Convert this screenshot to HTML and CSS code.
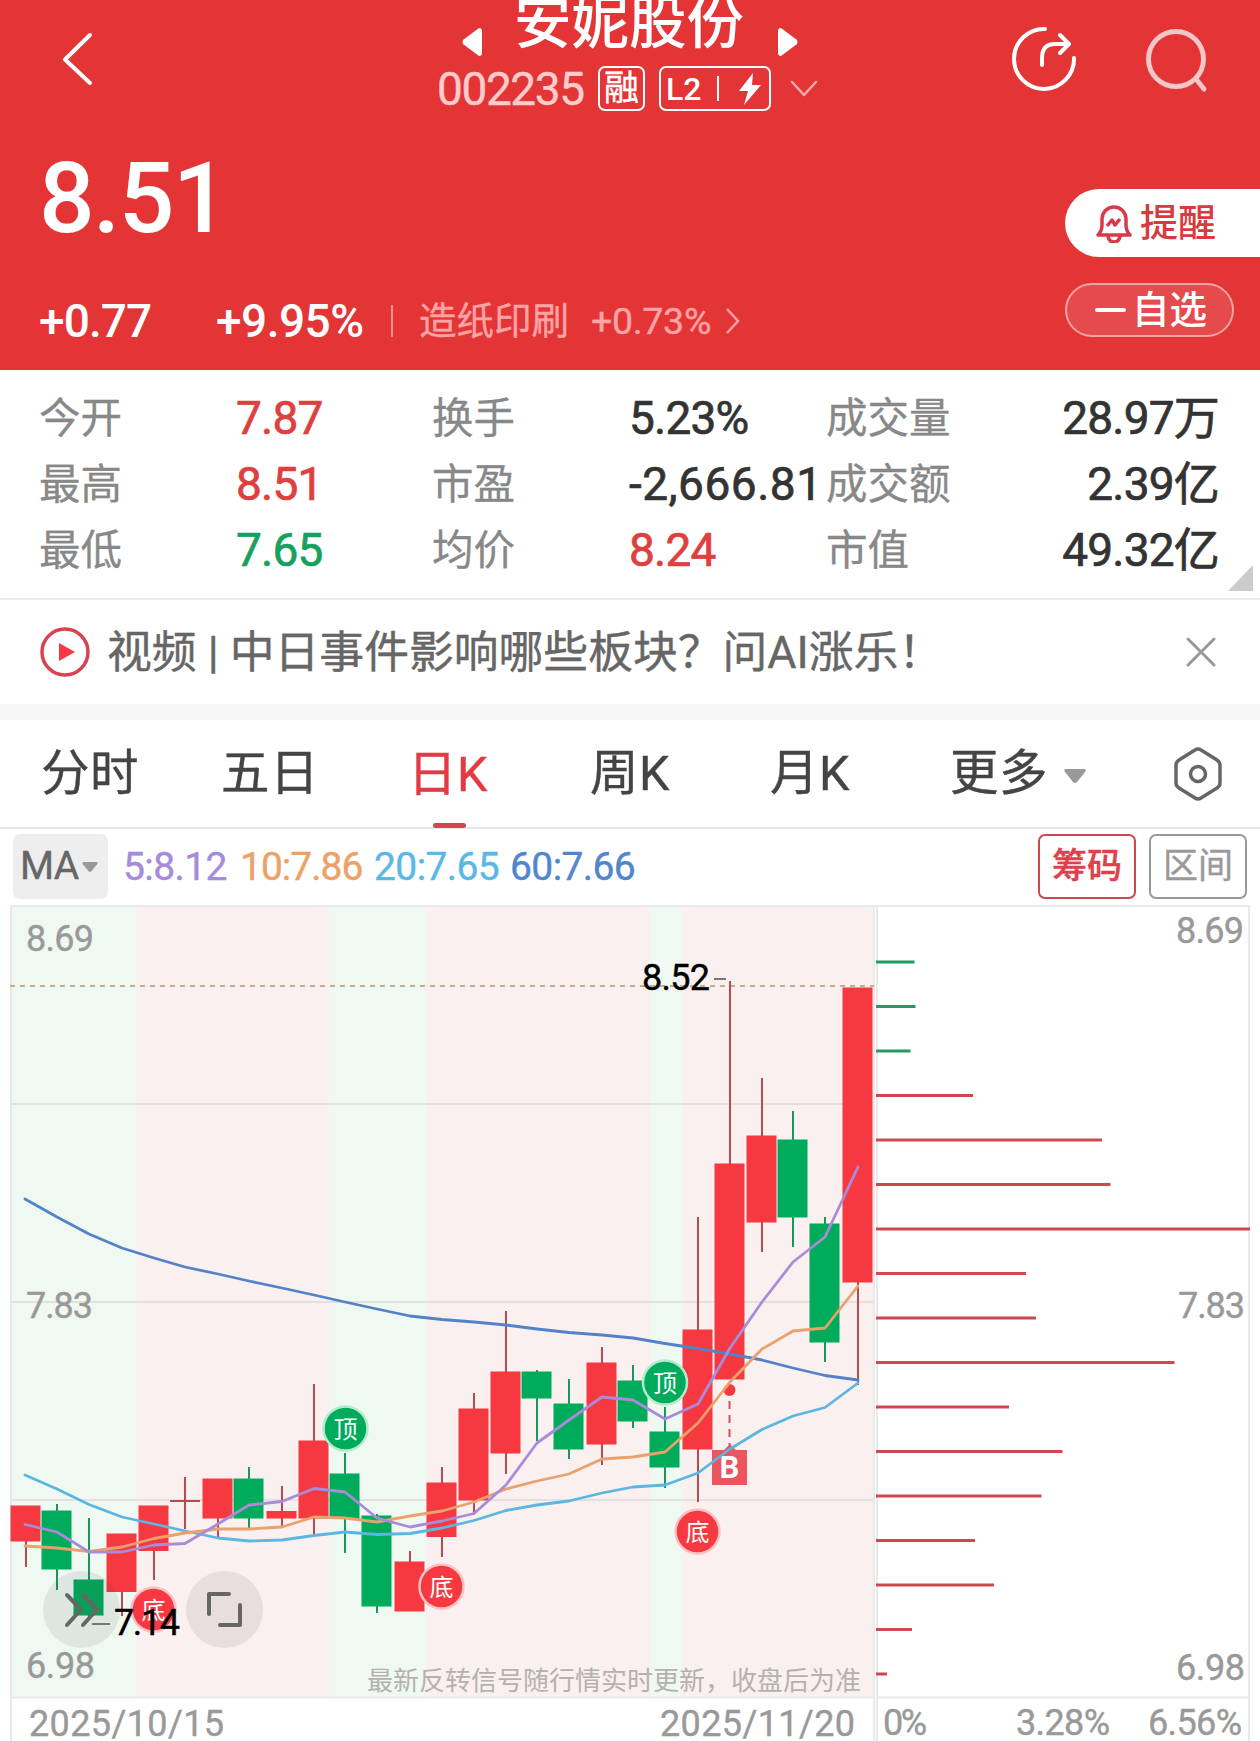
FILE: index.html
```
<!DOCTYPE html>
<html lang="zh-CN">
<head>
    <meta charset="UTF-8">
    <meta name="viewport" content="width=device-width, initial-scale=1.0">
    <title>安妮股份 002235</title>
    <link rel="stylesheet" href="styles.css">
</head>
<body>
    <header class="header">
        <div class="topbar">
            <svg class="back" width="36" height="56" viewBox="0 0 36 56"><path d="M30 5 5 29.500 30 53"/></svg>
            <div class="stock">
                <div class="stock-name">
                    <svg width="20" height="28" viewBox="0 0 20 28"><path d="M17 0q3 0 3 3v22q0 3-3 3L1 16q-1-2 0-4z"/></svg>
                    <h1>安妮股份</h1>
                    <svg width="20" height="28" viewBox="0 0 20 28"><path d="M3 0Q0 0 0 3v22q0 3 3 3l16-12q1-2 0-4z"/></svg>
                </div>
                <div class="stock-code">
                    <span class="code">002235</span>
                    <span class="tag">融</span>
                    <span class="tag tag-l2">L2<i></i>
                        <svg width="24" height="32" viewBox="0 0 24 32"><path d="M15 0 1 18h9L6 32 23 12h-9z"/></svg>
                    </span>
                    <svg class="down" width="28" height="18" viewBox="0 0 28 18"><path d="m2 2 12 13L26 2"/></svg>
                </div>
            </div>
            <svg class="share" width="66" height="66" viewBox="0 0 66 66"><path d="M34 3A30 30 0 1 0 63 32M31 39V32Q31 18 44 18H56M49 9l9 9-9 9"/></svg>
            <svg class="search" width="66" height="66" viewBox="0 0 66 66"><circle cx="32" cy="32" r="27.500"/><path d="m52 52 8 10"/></svg>
        </div>

        <div class="quote">
            <div class="quote-left">
                <div class="price">8.51</div>
                <div class="change">
                    <span class="diff">+0.77</span>
                    <span class="pct">+9.95%</span>
                    <i></i>
                    <span class="sector">造纸印刷</span>
                    <span class="sector-pct">+0.73%</span>
                    <svg width="16" height="28" viewBox="0 0 16 28"><path d="m2 2 11 12L2 26"/></svg>
                </div>
            </div>
            <div class="quote-right">
                <div class="remind">
                    <svg width="36" height="40" viewBox="0 0 36 40"><path d="M2 32Q6 28 6 22V16a12 12 0 0 1 24 0v6q0 6 4 10zM12 33q1 6 6 6t6-6M11 23l5-6 3 5 5-6"/></svg>
                    提醒
                </div>
                <div class="favorite"><i></i>自选</div>
            </div>
        </div>
    </header>

    <section class="stats">
        <span>今开</span><b class="up">7.87</b><span>换手</span><b>5.23%</b><span>成交量</span><b class="last">28.97万</b>
        <span>最高</span><b class="up">8.51</b><span>市盈</span><b class="wide">-2,666.81</b><span>成交额</span><b class="last">2.39亿</b>
        <span>最低</span><b class="down-price">7.65</b><span>均价</span><b class="up">8.24</b><span>市值</span><b class="last">49.32亿</b>
        <svg class="corner" width="25" height="26" viewBox="0 0 25 26"><path d="M25 0v26H0z"/></svg>
    </section>

    <section class="news">
        <svg width="50" height="50" viewBox="0 0 50 50"><circle cx="25" cy="25" r="23"/><path d="M19 16v18l16-9z"/></svg>
        <p>视频 | 中日事件影响哪些板块？问AI涨乐！</p>
        <svg class="close" width="30" height="30" viewBox="0 0 30 30"><path d="m2 2 26 26M28 2 2 28"/></svg>
    </section>

    <nav class="tabs">
        <span>分时</span>
        <span>五日</span>
        <span class="active">日K</span>
        <span>周K</span>
        <span>月K</span>
        <span class="more">更多<svg width="22" height="14" viewBox="0 0 22 14"><path d="M2 0h18q3 0 1 3l-8 10q-2 2-4 0L1 3Q-1 0 2 0z"/></svg></span>
        <svg class="setting" width="50" height="54" viewBox="0 0 50 54"><path d="M22 3q3-2 6 0l16 10q3 2 3 5v18q0 3-3 5L28 51q-3 2-6 0L6 41q-3-2-3-5V18q0-3 3-5z"/><circle cx="25" cy="27" r="7.500"/></svg>
    </nav>

    <div class="indicator">
        <span class="ma">MA<svg width="16" height="10" viewBox="0 0 22 14"><path d="M2 0h18q3 0 1 3l-8 10q-2 2-4 0L1 3Q-1 0 2 0z"/></svg></span>
        <span class="ma5">5:8.12</span>
        <span class="ma10">10:7.86</span>
        <span class="ma20">20:7.65</span>
        <span class="ma60">60:7.66</span>
        <button class="btn btn-on">筹码</button>
        <button class="btn">区间</button>
    </div>

    <svg class="chart" width="1260" height="840" viewBox="0 901 1260 840">
        <!-- signal zones -->
        <path class="zone-green" d="M11 906H137V1697H11zM329 906H426V1697H329M650 906H682V1697H650z"/>
        <path class="zone-red" d="M137 906H329V1697H137zM426 906H650V1697H426zM682 906H873V1697H682z"/>
        <path class="grid" d="M11 1104H873M11 1302H873M11 1500H873"/>
        <path class="frame" d="M10 906H1250M11 906V1741M874 906V1741M877 906V1741M1249 906V1741M11 1697.500H873M877 1697.500H1249"/>
        <path class="last-price" d="M10 986H874"/>

        <!-- candles -->
        <path class="wick-red" d="M26 1541V1567M122 1592V1616M154 1550V1580M185 1477V1529M170 1501H200M218 1517V1537M282 1486V1526M314 1384V1534M410 1551V1562M442 1467V1557M474 1393V1515M506 1311V1474M602 1347V1465M698 1217V1502M730 981V1164M762 1078V1252M858 1282V1385"/>
        <path class="wick-green" d="M57 1504V1590M89 1518V1620M249 1467V1528M345 1453V1553M377 1514V1613M537 1370V1441M569 1379V1459M633 1365V1428M665 1407V1488M793 1111V1247M825 1217V1362"/>
        <g class="red">
            <rect x="10.500" y="1505.500" width="30" height="36"/>
            <rect x="106.500" y="1533.500" width="30" height="58.500"/>
            <rect x="138.500" y="1505.500" width="30" height="45.500"/>
            <rect x="202.500" y="1478.500" width="30" height="40"/>
            <rect x="266.500" y="1511" width="30" height="7.500"/>
            <rect x="298.500" y="1440.500" width="30" height="78"/>
            <rect x="394.500" y="1561.500" width="30" height="50"/>
            <rect x="426.500" y="1482.500" width="30" height="54.500"/>
            <rect x="458.500" y="1408.500" width="30" height="92"/>
            <rect x="490.500" y="1371.500" width="30" height="82"/>
            <rect x="586.500" y="1362.500" width="30" height="82"/>
            <rect x="682.500" y="1329.500" width="30" height="120"/>
            <rect x="714.500" y="1163.500" width="30" height="216"/>
            <rect x="746.500" y="1135.500" width="30" height="87"/>
            <rect x="842.500" y="987.500" width="30" height="295"/>
        </g>
        <g class="green">
            <rect x="41.500" y="1510.500" width="30" height="59"/>
            <rect x="73.500" y="1579.500" width="30" height="36"/>
            <rect x="233.500" y="1478.500" width="30" height="40"/>
            <rect x="329.500" y="1473.500" width="30" height="45"/>
            <rect x="361.500" y="1515.500" width="30" height="91"/>
            <rect x="521.500" y="1371.500" width="30" height="27"/>
            <rect x="553.500" y="1403.500" width="30" height="46"/>
            <rect x="617.500" y="1380.500" width="30" height="41"/>
            <rect x="649.500" y="1431.500" width="30" height="36"/>
            <rect x="777.500" y="1139.500" width="30" height="78"/>
            <rect x="809.500" y="1223.500" width="30" height="119"/>
        </g>

        <!-- buy point -->
        <circle class="red" cx="729.500" cy="1390" r="6"/>
        <path class="buy-line" d="M729.500 1401V1446"/>
        <path class="buy-box" d="M712 1450H724L730 1444 736 1450H747V1485H712z"/>
        <text class="buy-text" x="729.500" y="1478">B</text>

        <!-- moving averages -->
        <polyline class="line60" points="25,1199 57,1217 89,1234 122,1248 154,1258 185,1267 218,1274 249,1281 282,1288 314,1295 345,1302 377,1309 410,1316 442,1319.500 474,1322 506,1325 537,1329 569,1332.500 602,1335 633,1338 665,1343.500 698,1348.500 730,1354 762,1360 793,1368 825,1375.500 858,1380"/>
        <polyline class="line20" points="25,1475 57,1489 89,1504.500 122,1517 154,1524 185,1531 218,1538 249,1541 282,1540 314,1535.500 345,1532 377,1534.500 410,1533.500 442,1528 474,1520.500 506,1510.500 537,1505 569,1501 602,1493 633,1487 665,1485 698,1473 730,1449 762,1429.500 793,1416 825,1407.500 858,1383"/>
        <polyline class="line10" points="25,1546 57,1548 89,1551.500 122,1547 154,1538.500 185,1533 218,1529 249,1529 282,1527 314,1517 345,1518 377,1522 410,1516 442,1511 474,1502 506,1489 537,1481 569,1474 602,1459 633,1457 665,1452 698,1423 730,1382 762,1349 793,1331 825,1328 858,1286"/>
        <polyline class="line5" points="25,1524.500 57,1532 89,1552 122,1552 154,1545 185,1543.500 218,1524 249,1505 282,1501.500 314,1488.500 345,1492 377,1518 410,1527 442,1521 474,1513.500 506,1485 537,1443 569,1420 602,1397 633,1400 665,1419 698,1404 730,1348 762,1302 793,1262 825,1237 858,1167"/>

        <!-- top / bottom signals -->
        <g class="signal signal-top">
            <circle cx="345.500" cy="1428.500" r="22"/><text x="345.500" y="1437.500">顶</text>
            <circle cx="665" cy="1382.500" r="22"/><text x="665" y="1391.500">顶</text>
        </g>
        <g class="signal signal-bottom">
            <circle cx="153.500" cy="1609.500" r="22"/><text x="153.500" y="1618.500">底</text>
            <circle cx="441.500" cy="1586.500" r="22"/><text x="441.500" y="1595.500">底</text>
            <circle cx="697.500" cy="1531.500" r="22"/><text x="697.500" y="1540.500">底</text>
        </g>

        <!-- floating controls -->
        <g class="control">
            <circle cx="81.500" cy="1609.500" r="38.500"/>
            <circle cx="224.500" cy="1609.500" r="38.500"/>
            <path d="m67 1595 14 14.500-14 15.500M83 1595l14 14.500L83 1625M209 1614V1594H229M240 1605V1625H220"/>
        </g>

        <path class="mark-line" d="M714 979H726M92 1624H110"/>
        <text class="mark" x="642" y="990" textLength="68">8.52</text>
        <text class="mark" x="114" y="1635" textLength="66">7.14</text>

        <g class="axis">
            <text x="26" y="951" textLength="68">8.69</text>
            <text x="26" y="1317.500" textLength="67">7.83</text>
            <text x="26" y="1678" textLength="69">6.98</text>
            <text x="29" y="1736" textLength="195">2025/10/15</text>
            <text x="660" y="1736" textLength="195">2025/11/20</text>
            <text x="1176" y="943" textLength="68">8.69</text>
            <text x="1178" y="1317.500" textLength="67">7.83</text>
            <text x="1176" y="1680" textLength="69">6.98</text>
            <text x="883" y="1735" textLength="44">0%</text>
            <text x="1016" y="1735" textLength="94">3.28%</text>
            <text x="1148" y="1735" textLength="94">6.56%</text>
        </g>
        <text class="notice" x="367" y="1690" textLength="494">最新反转信号随行情实时更新，收盘后为准</text>

        <!-- chip distribution -->
        <path class="chip-green" d="M876 962H914.500M876 1006.500H915.500M876 1051H910.500"/>
        <path class="chip-red" d="M876 1095.500H973M876 1140H1102M876 1184.500H1110.500M876 1229H1250M876 1273.500H1026M876 1318H1036M876 1362.500H1174.500M876 1407H1009M876 1451.500H1062.500M876 1496H1041.500M876 1540.500H975M876 1585H994M876 1629.500H912M876 1674H887"/>
    </svg>
</body>
</html>
```
FILE: styles.css
```
* {
    box-sizing: border-box;
}
body {
    margin: 0;
    width: 1260px;
    height: 1741px;
    overflow: hidden;
    background: #fff;
    color: #333;
    font-family: Roboto, "Noto Sans CJK SC", sans-serif;
}
svg {
    display: block;
    flex: none;
}
i {
    flex: none;
}

/* header */
.header {
    height: 370px;
    background: #e33436;
    color: #fff;
}
.topbar {
    display: flex;
    height: 120px;
    padding-left: 60px;
}
.topbar svg {
    fill: none;
    stroke: #fff;
    stroke-width: 4;
    stroke-linecap: round;
    stroke-linejoin: round;
}
.back {
    margin-top: 30px;
}
.stock {
    width: 382px;
    margin-left: 341px;
}
.stock-name {
    display: flex;
    align-items: flex-start;
    height: 66px;
    padding-left: 25px;
}
.topbar .stock-name svg {
    margin-top: 28px;
    fill: #fff;
    stroke: none;
}
.stock-name h1 {
    width: 232px;
    margin: -6px 32px 0 32px;
    font-size: 57.5px;
    font-weight: 500;
    line-height: 60px;
    white-space: nowrap;
}
.stock-code {
    display: flex;
    align-items: center;
    height: 45px;
}
.code {
    width: 161px;
    color: #ffcccb;
    font-size: 46px;
    letter-spacing: -1.4px;
    -webkit-text-stroke: 0.4px;
}
.tag {
    display: flex;
    align-items: center;
    justify-content: center;
    width: 47px;
    height: 45px;
    margin-right: 14px;
    border: 2px solid #fff;
    border-radius: 7px;
    font-size: 35px;
    line-height: 40px;
    -webkit-text-stroke: 0.4px;
}
.tag-l2 {
    justify-content: flex-start;
    width: 112px;
    margin-right: 19px;
    padding-left: 5px;
    font-size: 32px;
    font-weight: 500;
    -webkit-text-stroke: 0;
}
.tag-l2 i {
    width: 2px;
    height: 25px;
    margin: 0 19px 0 16px;
    background: #fff;
}
.topbar .tag-l2 svg {
    fill: #fff;
    stroke: none;
}
.topbar .down {
    stroke: #f6abab;
    stroke-width: 2.5;
}
.share {
    margin: 26px 0 0 192px;
}
.search {
    margin: 27px 0 0 67px;
}
.topbar .search {
    stroke: #f4c6c8;
    stroke-width: 5;
}
.quote {
    display: flex;
    justify-content: space-between;
}
.quote-left {
    padding-left: 39px;
}
.price {
    height: 160px;
    padding-top: 22px;
    font-size: 98px;
    font-weight: 500;
    line-height: 114px;
    letter-spacing: -1.6px;
}
.change {
    display: flex;
    align-items: center;
    height: 80px;
    padding-top: 2px;
    font-size: 46px;
    font-weight: 500;
    white-space: nowrap;
}
.diff {
    width: 177px;
    letter-spacing: -0.9px;
}
.pct {
    width: 175px;
    letter-spacing: -0.5px;
}
.change i {
    width: 2px;
    height: 32px;
    margin-right: 26px;
    background: #f09090;
}
.sector,
.sector-pct {
    color: #ffa3a4;
    font-size: 37.5px;
    font-weight: 400;
    -webkit-text-stroke: 0.4px;
}
.sector {
    width: 172px;
    margin-top: -8px;
}
.sector-pct {
    width: 134px;
    letter-spacing: -0.3px;
}
.change svg {
    fill: none;
    stroke: #ffa3a4;
    stroke-width: 2.5;
}
.quote-right {
    width: 195px;
    padding-top: 69px;
}
.remind {
    display: flex;
    align-items: center;
    gap: 8px;
    height: 68px;
    padding-left: 31px;
    border-radius: 34px 0 0 34px;
    background: #fff;
    color: #d93a3d;
    font-size: 38px;
    font-weight: 500;
    line-height: 60px;
}
.remind svg {
    fill: none;
    stroke: #d93a4a;
    stroke-width: 3.5;
    stroke-linejoin: round;
}
.favorite {
    display: flex;
    align-items: center;
    gap: 6px;
    width: 169px;
    height: 54px;
    margin-top: 26px;
    padding-left: 28px;
    border: 2px solid #f4a3a3;
    border-radius: 27px;
    background: #e54b4c;
    font-size: 37.5px;
    font-weight: 500;
    line-height: 50px;
}
.favorite i {
    width: 31px;
    height: 4px;
    border-radius: 2px;
    background: #fff;
}

/* stats table */
.stats {
    position: relative;
    display: grid;
    grid-template-columns: 197px 196px 197px 197px 180px 213px;
    grid-auto-rows: 66px;
    height: 230px;
    padding: 15px 0 0 39px;
    border-bottom: 2px solid #ebebeb;
    font-size: 41.5px;
    line-height: 68px;
    white-space: nowrap;
}
.stats span {
    color: #888;
    -webkit-text-stroke: 0.3px;
}
.stats b {
    font-size: 46px;
    font-weight: 400;
    line-height: 67px;
    letter-spacing: -0.8px;
    -webkit-text-stroke: 0.7px;
}
.stats .wide {
    letter-spacing: 0.5px;
}
.stats .up {
    color: #dd403e;
}
.stats .down-price {
    color: #18a05f;
}
.stats .last {
    text-align: right;
}
.corner {
    position: absolute;
    right: 7px;
    bottom: 7px;
    fill: #ccc;
}

/* news bar */
.news {
    display: flex;
    align-items: center;
    height: 104px;
    padding: 0 44px 0 40px;
}
.news p {
    flex: 1;
    margin: 1px 0 0 17px;
    color: #666;
    font-size: 44.8px;
    line-height: 60px;
    -webkit-text-stroke: 0.4px;
}
.news circle {
    fill: none;
    stroke: #d94350;
    stroke-width: 3.5;
}
.news path {
    fill: #f53842;
}
.news .close path {
    stroke: #999;
    stroke-width: 3;
    stroke-linecap: round;
}

/* period tabs */
.tabs {
    display: grid;
    grid-template-columns: 180px 187px 182px 180px 180px 223px 50px;
    align-items: center;
    height: 125px;
    padding-left: 41px;
    border-top: 16px solid #f7f7f7;
    border-bottom: 2px solid #e8e8e8;
    color: #444;
    font-size: 48.5px;
    line-height: 108px;
    letter-spacing: 0.4px;
    -webkit-text-stroke: 0.4px;
}
.tabs .active {
    display: flex;
    flex-direction: column;
    width: 84px;
    height: 107px;
    color: #e23b45;
}
.active::after {
    content: "";
    flex: none;
    width: 33px;
    height: 5px;
    margin: -6px 0 0 25px;
    border-radius: 3px;
    background: #d9434d;
}
.more {
    display: flex;
    align-items: center;
    gap: 16px;
}
.more svg {
    margin-top: 4px;
    fill: #999;
}
.setting {
    fill: none;
    stroke: #666;
    stroke-width: 3.5;
}

/* indicator bar */
.indicator {
    display: flex;
    align-items: center;
    height: 72px;
    padding: 5px 13px 2px;
    font-size: 39px;
    line-height: 67px;
    letter-spacing: -0.6px;
    white-space: nowrap;
    -webkit-text-stroke: 0.4px;
}
.ma {
    display: flex;
    align-items: center;
    gap: 3px;
    width: 95px;
    height: 65px;
    margin-right: 15px;
    padding-left: 7px;
    border-radius: 7px;
    background: #eee;
    color: #666;
}
.ma svg {
    fill: #999;
}
.ma5,
.ma10,
.ma20,
.ma60 {
    padding-top: 2px;
}
.ma5 {
    width: 117px;
    color: #a68bdc;
}
.ma10 {
    width: 134px;
    color: #eba268;
    letter-spacing: -1px;
}
.ma20 {
    width: 136px;
    color: #5bb8e6;
}
.ma60 {
    flex: 1;
    color: #5286cc;
}
.btn {
    width: 98px;
    height: 65px;
    margin-left: 13px;
    padding: 0;
    border: 2px solid #999;
    border-radius: 7px;
    background: #fff;
    color: #999;
    font-family: inherit;
    font-size: 35px;
    line-height: 52px;
}
.btn-on {
    border-color: #cc4850;
    color: #dc424b;
    font-weight: 500;
}

/* chart */
.zone-green {
    fill: #eff9f2;
}
.zone-red {
    fill: #faf0ef;
}
.grid,
.frame,
.last-price,
.wick-red,
.wick-green,
.buy-line,
.mark-line,
.chip-red,
.chip-green,
.chart polyline {
    fill: none;
    stroke-width: 2;
}
.grid {
    stroke: #e5dfde;
}
.frame {
    stroke: #e9e9e9;
}
.last-price {
    stroke: #c8ad88;
    stroke-dasharray: 5 5;
}
.wick-red {
    stroke: #b74a50;
}
.wick-green {
    stroke: #159a5c;
}
.red {
    fill: #f63841;
}
.green {
    fill: #00ab5c;
}
.chart polyline {
    stroke-width: 2.8;
    stroke-linecap: round;
    stroke-linejoin: round;
}
.chart .line5 {
    stroke: #a98bda;
}
.chart .line10 {
    stroke: #e9a26c;
}
.chart .line20 {
    stroke: #5bb6e2;
}
.chart .line60 {
    stroke: #5382c8;
}
.buy-line {
    stroke: #d8505a;
    stroke-dasharray: 8 6;
}
.buy-box {
    fill: #ec5460;
}
.buy-text {
    fill: #fff;
    font-size: 31px;
    font-weight: 700;
    text-anchor: middle;
}
.signal circle {
    stroke-width: 2.5;
}
.signal text {
    fill: #fff;
    font-size: 24px;
    text-anchor: middle;
}
.signal-top circle {
    fill: #00ab5c;
    stroke: #b4ebcf;
}
.signal-bottom circle {
    fill: #f63841;
    stroke: #fcc3c7;
}
.control circle {
    fill: rgba(70, 70, 70, 0.1);
}
.control path {
    fill: none;
    stroke: #666;
    stroke-width: 4;
    stroke-linecap: round;
    stroke-linejoin: round;
}
.mark-line {
    stroke: #777;
}
.mark {
    fill: #000;
    stroke: #000;
    stroke-width: 0.4;
    font-size: 36px;
}
.axis {
    fill: #999;
    stroke: #999;
    stroke-width: 0.4;
    font-size: 36px;
}
.notice {
    fill: #b5b1b0;
    font-size: 26px;
}
.chip-red,
.chip-green {
    stroke-width: 3;
}
.chip-red {
    stroke: #d0484f;
}
.chip-green {
    stroke: #249a67;
}
```
